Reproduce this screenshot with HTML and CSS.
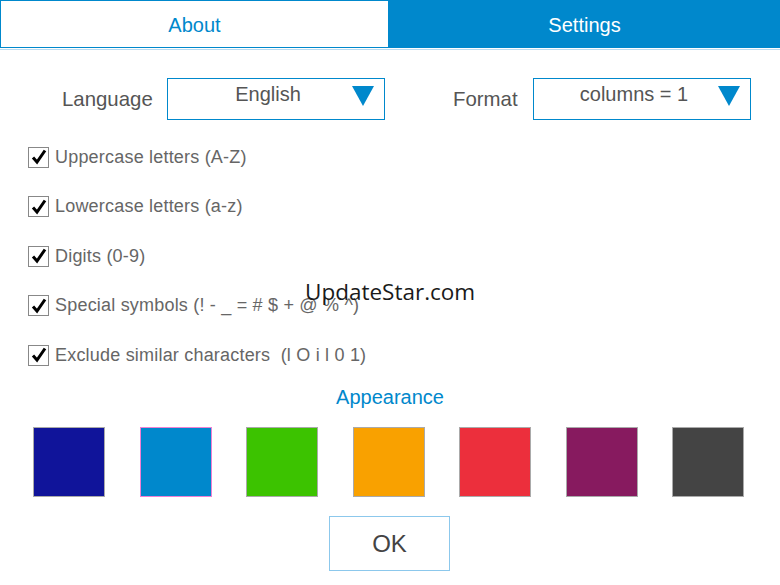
FILE: index.html
```html
<!DOCTYPE html>
<html lang="en">
    <head>
        <meta charset="UTF-8" />
        <meta name="viewport" content="width=device-width, initial-scale=1.0" />
        <title>Settings</title>
        <link rel="stylesheet" href="styles.css">
    </head>
    <body>
        <div class="tabs">
            <div class="tab">About</div>
            <div class="tab active">Settings</div>
        </div>

        <div class="options">
            <span class="label lang-label">Language</span>
            <div class="select">
                <span class="select-text">English</span>
                <svg class="arrow" width="22" height="20" viewBox="0 0 22 20">
                    <polygon points="0,0 22,0 11,20" fill="#0088cc"></polygon>
                </svg>
            </div>
            <span class="label format-label">Format</span>
            <div class="select">
                <span class="select-text">columns = 1</span>
                <svg class="arrow" width="22" height="20" viewBox="0 0 22 20">
                    <polygon points="0,0 22,0 11,20" fill="#0088cc"></polygon>
                </svg>
            </div>
        </div>

        <ul class="checks">
            <li class="check">
                <span class="box"><svg width="18" height="18" viewBox="0 0 18 18"><path d="M3 9.5 L7 14 L15 2.5" fill="none" stroke="#000" stroke-width="3"></path></svg></span>
                Uppercase letters (A-Z)
            </li>
            <li class="check">
                <span class="box"><svg width="18" height="18" viewBox="0 0 18 18"><path d="M3 9.5 L7 14 L15 2.5" fill="none" stroke="#000" stroke-width="3"></path></svg></span>
                Lowercase letters (a-z)
            </li>
            <li class="check">
                <span class="box"><svg width="18" height="18" viewBox="0 0 18 18"><path d="M3 9.5 L7 14 L15 2.5" fill="none" stroke="#000" stroke-width="3"></path></svg></span>
                Digits (0-9)
            </li>
            <li class="check">
                <span class="box"><svg width="18" height="18" viewBox="0 0 18 18"><path d="M3 9.5 L7 14 L15 2.5" fill="none" stroke="#000" stroke-width="3"></path></svg></span>
                Special symbols (! - _ = # $ + @ % ^)
            </li>
            <li class="check">
                <span class="box"><svg width="18" height="18" viewBox="0 0 18 18"><path d="M3 9.5 L7 14 L15 2.5" fill="none" stroke="#000" stroke-width="3"></path></svg></span>
                <span class="pre">Exclude similar characters  (l O i l 0 1)</span>
            </li>
        </ul>

        <div class="watermark">UpdateStar.com</div>

        <div class="appearance">Appearance</div>
        <div class="swatches">
            <div class="swatch navy"></div>
            <div class="swatch blue selected"></div>
            <div class="swatch green"></div>
            <div class="swatch orange"></div>
            <div class="swatch red"></div>
            <div class="swatch purple"></div>
            <div class="swatch dark"></div>
        </div>

        <div class="actions">
            <button class="ok">OK</button>
        </div>
    </body>
</html>
```

FILE: styles.css
```css
*,
*::before,
*::after {
    box-sizing: border-box;
}

body {
    margin: 0;
    background: #fff;
    font-family: "Liberation Sans", Arial, sans-serif;
    color: #555;
    position: relative;
}

.tabs {
    display: flex;
    height: 50px;
    border-bottom: 1px solid #b9dcf2;
}
.tab {
    flex: 0 0 389px;
    height: 48px;
    display: flex;
    align-items: center;
    justify-content: center;
    padding-top: 2px;
    font-size: 20px;
    color: #0088cc;
    border: 1.5px solid #0088cc;
    background: #fff;
}
.tab.active {
    flex: 1;
    background: #0088cc;
    color: #fff;
}

.options {
    display: flex;
    align-items: center;
    margin-top: 28px;
    padding-left: 62px;
}
.label {
    font-size: 20.4px;
    color: #555;
}
.lang-label {
    width: 105px;
}
.format-label {
    width: 80px;
    margin-left: 68px;
}

.select {
    width: 218px;
    height: 42px;
    border: 1.5px solid #0088cc;
    display: flex;
    align-items: flex-start;
}
.select-text {
    flex: 1;
    text-align: center;
    font-size: 20px;
    line-height: 24px;
    padding: 3px 0 0 16px;
    color: #555;
}
.select .arrow {
    margin: 7px 10px 0 0;
}

.checks {
    list-style: none;
    margin: 25px 0 0 28px;
    padding: 0;
    display: flex;
    flex-direction: column;
    gap: 25.5px;
}
.check {
    display: flex;
    align-items: center;
    height: 24px;
    font-size: 18px;
    letter-spacing: 0.2px;
    color: #666;
}
.check .pre {
    white-space: pre;
}
.box {
    width: 21px;
    height: 21px;
    border: 1.5px solid #888;
    margin-right: 6px;
    display: flex;
    align-items: center;
    justify-content: center;
}

.watermark {
    position: absolute;
    left: 305px;
    top: 276px;
    font-family: "Open Sans", "Noto Sans", sans-serif;
    font-size: 22.5px;
    color: #1a1a1a;
}

.appearance {
    margin-top: 18px;
    text-align: center;
    font-size: 20px;
    line-height: 24px;
    color: #0088cc;
}

.swatches {
    display: flex;
    justify-content: space-between;
    padding: 0 36px 0 33px;
    margin-top: 18px;
}
.swatch {
    width: 72px;
    height: 70px;
    border: 1px solid #aaa;
}
.swatch.selected {
    border-color: #ef80d4;
}
.navy { background: #10149a; }
.blue { background: #0088cc; }
.green { background: #3cc300; }
.orange { background: #f9a100; }
.red { background: #ec2f3c; }
.purple { background: #871a5f; }
.dark { background: #444; }

.actions {
    display: flex;
    justify-content: center;
    margin-top: 19px;
}
.ok {
    width: 121px;
    height: 55px;
    background: #fff;
    border: 1.5px solid #8cc8ec;
    font-family: "Liberation Sans", Arial, sans-serif;
    font-size: 24px;
    color: #444;
    margin-right: 1px;
}
```
